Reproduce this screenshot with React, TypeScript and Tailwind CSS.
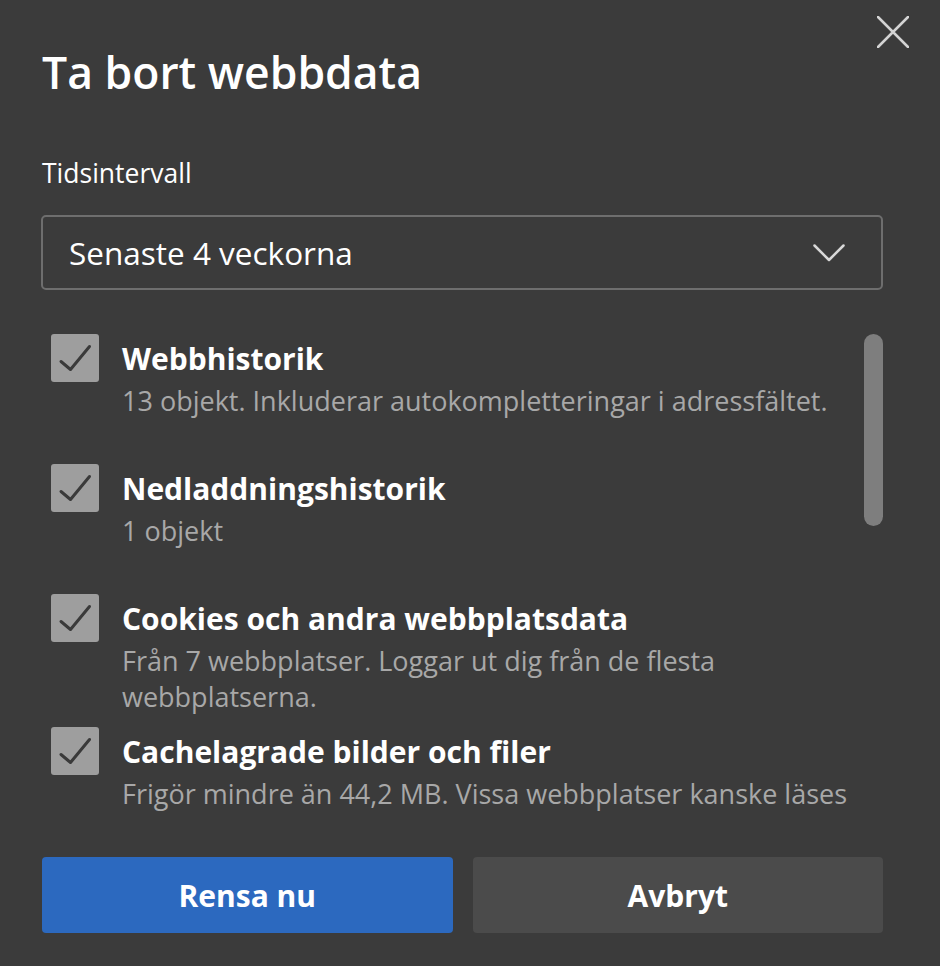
import React from 'react';

interface Item {
    title: string;
    lines: string[];
}

const items: Item[] = [
    { title: 'Webbhistorik', lines: ['13 objekt. Inkluderar autokompletteringar i adressfältet.'] },
    { title: 'Nedladdningshistorik', lines: ['1 objekt'] },
    { title: 'Cookies och andra webbplatsdata', lines: ['Från 7 webbplatser. Loggar ut dig från de flesta', 'webbplatserna.'] },
    { title: 'Cachelagrade bilder och filer', lines: ['Frigör mindre än 44,2 MB. Vissa webbplatser kanske läses'] },
];

const CheckBox = () => (
    <div className="w-[48px] h-[48px] shrink-0 rounded-[3px] bg-[#9e9e9e] flex items-center justify-center">
        <svg width="48" height="48" viewBox="0 0 48 48" fill="none">
            <path d="M10 27.5 L19.5 35.5 L38.5 12.5" stroke="#3a3a3a" strokeWidth="3" strokeLinecap="round" strokeLinejoin="round" />
        </svg>
    </div>
);

export default function App() {
    return (
        <div
            className="relative w-[940px] h-[966px] bg-[#3b3b3b] text-white pl-[42px] pr-[57px] pt-[44px]"
            style={{ fontFamily: '"Open Sans", "Noto Sans", sans-serif' }}
        >
            {/* Close button */}
            <button className="absolute top-[16px] right-[31px] w-[32px] h-[32px] flex items-center justify-center">
                <svg width="32" height="32" viewBox="0 0 32 32" fill="none">
                    <path d="M1 1 L31 31 M31 1 L1 31" stroke="#d4d4d4" strokeWidth="2.5" strokeLinecap="round" />
                </svg>
            </button>

            {/* Title */}
            <h1 className="text-[44.5px] leading-[56px] font-semibold">Ta bort webbdata</h1>

            {/* Time range */}
            <div className="mt-[55px] text-[26.5px] leading-[36px]">Tidsintervall</div>
            <div className="mt-[24px] h-[75px] -ml-px border-2 border-[#6e6e6e] rounded-[5px] flex items-center justify-between pl-[26px] pr-[36px]">
                <span className="text-[31.5px] leading-[40px]">Senaste 4 veckorna</span>
                <svg width="32" height="18" viewBox="0 0 32 18" fill="none">
                    <path d="M1.5 1.5 L16 16 L30.5 1.5" stroke="#d8d8d8" strokeWidth="2.5" strokeLinecap="round" strokeLinejoin="round" />
                </svg>
            </div>

            {/* Data list */}
            <div className="mt-[44px] h-[484px] flex">
                <div className="flex-1 overflow-hidden">
                    {items.map((item) => (
                        <div key={item.title} className="flex gap-[23px] pl-[9px] min-h-[130px] pb-[12px]">
                            <CheckBox />
                            <div className="flex flex-col">
                                <div className="mt-[5px] text-[30px] leading-[40px] font-bold whitespace-nowrap">{item.title}</div>
                                <div className="mt-[4px] text-[27px] leading-[36px] text-[#a8a8a8]">
                                    {item.lines.map((line) => (
                                        <div key={line} className="whitespace-nowrap">{line}</div>
                                    ))}
                                </div>
                            </div>
                        </div>
                    ))}
                </div>
                <div className="w-[19px] shrink-0">
                    <div className="h-[192px] rounded-full bg-[#7e7e7e]" />
                </div>
            </div>

            {/* Actions */}
            <div className="mt-[39px] grid grid-cols-2 gap-[20px]">
                <button className="h-[76px] rounded-[4px] bg-[#2c69bf] text-[30px] font-bold">Rensa nu</button>
                <button className="h-[76px] rounded-[4px] bg-[#4b4b4b] text-[30px] font-bold">Avbryt</button>
            </div>
        </div>
    );
}
